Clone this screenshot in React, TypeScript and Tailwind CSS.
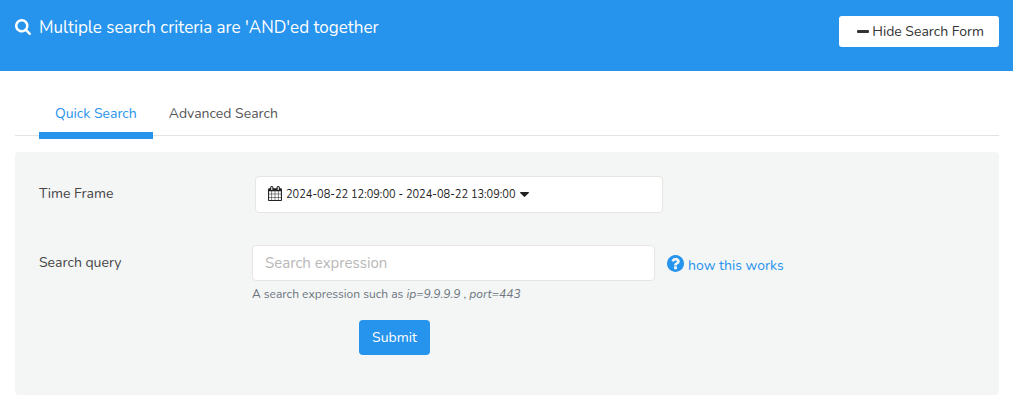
import { useState } from "react";
import type { ReactNode } from "react";

type IconProps = { className?: string; viewBox: string; children: ReactNode };

function Icon({ className, viewBox, children }: IconProps) {
  return (
    <svg className={className} viewBox={viewBox} fill="currentColor" aria-hidden="true">
      {children}
    </svg>
  );
}

const tabs = ["Quick Search", "Advanced Search"];

export default function App() {
  const [open, setOpen] = useState(true);
  const [tab, setTab] = useState(tabs[0]);

  return (
    <div className="bg-white font-['Nunito','Lato',sans-serif] text-sm text-[#444]">
      <header className="flex items-start justify-between bg-[#2693ec] pt-4 pr-3.5 pb-6 pl-[15px] text-white">
        <h1 className="flex items-center gap-2 text-[17px] leading-6">
          <Icon className="-mt-0.5 h-4 w-4" viewBox="64 128 1664 1664">
            <path d="M1216 832q0-185-131.5-316.5t-316.5-131.5-316.5 131.5-131.5 316.5 131.5 316.5 316.5 131.5 316.5-131.5 131.5-316.5zm512 832q0 52-38 90t-90 38q-54 0-90-38l-343-342q-179 124-399 124-143 0-273.5-55.5t-225-150-150-225-55.5-273.5 55.5-273.5 150-225 225-150 273.5-55.5 273.5 55.5 225 150 150 225 55.5 273.5q0 220-124 399l343 343q37 37 37 90z" />
          </Icon>
          Multiple search criteria are 'AND'ed together
        </h1>
        <button
          type="button"
          onClick={() => setOpen(!open)}
          className="flex h-[31px] w-40 items-center justify-end gap-[3px] rounded-[3px] bg-white pr-[15px] text-[#333]"
        >
          <Icon className="h-3 w-3" viewBox="0 0 12 12">
            <rect y="4" width="12" height="3" rx="1" />
          </Icon>
          Hide Search Form
        </button>
      </header>

      {open && (
        <main className="pt-5 pr-3.5 pl-[15px]">
          <div role="tablist" className="flex border-b border-[#e3e3e3] px-6">
            {tabs.map((name) => (
              <button
                key={name}
                type="button"
                role="tab"
                aria-selected={tab === name}
                onClick={() => setTab(name)}
                className={
                  tab === name
                    ? "-mb-1 border-b-[7px] border-[#2693ec] px-4 pt-[13px] pb-2 text-[#2693ec]"
                    : "-mb-1 border-b-[7px] border-transparent px-4 pt-[13px] pb-2 text-[#555]"
                }
              >
                {name}
              </button>
            ))}
          </div>

          <form
            onSubmit={(e) => e.preventDefault()}
            className="mt-4 rounded-[4px] bg-[#f4f6f6] px-6 pt-6 pb-10"
          >
            <div className="flex">
              <label htmlFor="timeframe" className="w-[216px] shrink-0 pt-2">
                Time Frame
              </label>
              <button
                id="timeframe"
                type="button"
                className="flex h-[37px] w-[408px] items-center gap-1 rounded-[4px] border border-[#e8e5e0] bg-white px-3 pt-px text-[11px] text-[#222]"
              >
                <Icon className="-mt-1 h-[15px] w-3.5" viewBox="64 0 1664 1792">
                  <path d="M192 1664h288v-288h-288v288zm352 0h320v-288h-320v288zm-352-352h288v-320h-288v320zm352 0h320v-320h-320v320zm-352-384h288v-288h-288v288zm736 736h320v-288h-320v288zm-384-736h320v-288h-320v288zm768 736h288v-288h-288v288zm-384-352h320v-320h-320v320zm-352-864v-288q0-13-9.5-22.5t-22.5-9.5h-64q-13 0-22.5 9.5t-9.5 22.5v288q0 13 9.5 22.5t22.5 9.5h64q13 0 22.5-9.5t9.5-22.5zm736 864h288v-320h-288v320zm-384-384h320v-288h-320v288zm384 0h288v-288h-288v288zm32-480v-288q0-13-9.5-22.5t-22.5-9.5h-64q-13 0-22.5 9.5t-9.5 22.5v288q0 13 9.5 22.5t22.5 9.5h64q13 0 22.5-9.5t9.5-22.5zm384-64v1280q0 52-38 90t-90 38h-1408q-52 0-90-38t-38-90v-1280q0-52 38-90t90-38h128v-96q0-66 47-113t113-47h64q66 0 113 47t47 113v96h384v-96q0-66 47-113t113-47h64q66 0 113 47t47 113v96h128q52 0 90 38t38 90z" />
                </Icon>
                <span>2024-08-22 12:09:00 - 2024-08-22 13:09:00</span>
                <Icon className="-mt-0.5 h-[5px] w-[9px]" viewBox="0 0 9 5">
                  <path d="M.6 0h7.8q.6 0 .6.5 0 .2-.2.4L4.9 4.8q-.4.3-.8 0L.2.9Q0 .7 0 .5 0 0 .6 0z" />
                </Icon>
              </button>
            </div>

            <div className="mt-8 flex">
              <label htmlFor="query" className="w-[213px] shrink-0 pt-2">
                Search query
              </label>
              <div className="w-[403px]">
                <input
                  id="query"
                  type="text"
                  placeholder="Search expression"
                  className="block h-9 w-full rounded-[4px] border border-[#e8e5e0] bg-white px-3 text-[15px] placeholder:text-[#b8b8b8]"
                />
                <p className="mt-1 text-xs leading-[18px] text-[#6c757d]">
                  A search expression such as <i>ip=9.9.9.9</i> , <i>port=443</i>
                </p>
              </div>
              <a href="#help" className="ml-3 flex h-[42px] items-center gap-1 text-[#2693ec]">
                <Icon className="-mt-1.5 h-[17px] w-[17px]" viewBox="128 128 1536 1536">
                  <path d="M1024 1376v-192q0-14-9-23t-23-9h-192q-14 0-23 9t-9 23v192q0 14 9 23t23 9h192q14 0 23-9t9-23zm256-672q0-88-55.5-163t-138.5-116-170-41q-243 0-371 213-15 24 8 42l132 100q7 6 19 6 16 0 25-12 53-68 86-92 34-24 86-24 48 0 85.5 26t37.5 59q0 38-20 61t-68 45q-63 28-115.5 86.5t-52.5 125.5v36q0 14 9 23t23 9h192q14 0 23-9t9-23q0-19 21.5-49.5t54.5-49.5q32-18 49-28.5t46-35 44.5-48 28-60.5 12.5-81zm384 192q0 209-103 385.5t-279.5 279.5-385.5 103-385.5-103-279.5-279.5-103-385.5 103-385.5 279.5-279.5 385.5-103 385.5 103 279.5 279.5 103 385.5z" />
                </Icon>
                how this works
              </a>
            </div>

            <button
              type="submit"
              className="mt-[17px] ml-80 block h-[35px] w-[71px] rounded-[4px] bg-[#2693ec] text-white"
            >
              Submit
            </button>
          </form>
        </main>
      )}
    </div>
  );
}
